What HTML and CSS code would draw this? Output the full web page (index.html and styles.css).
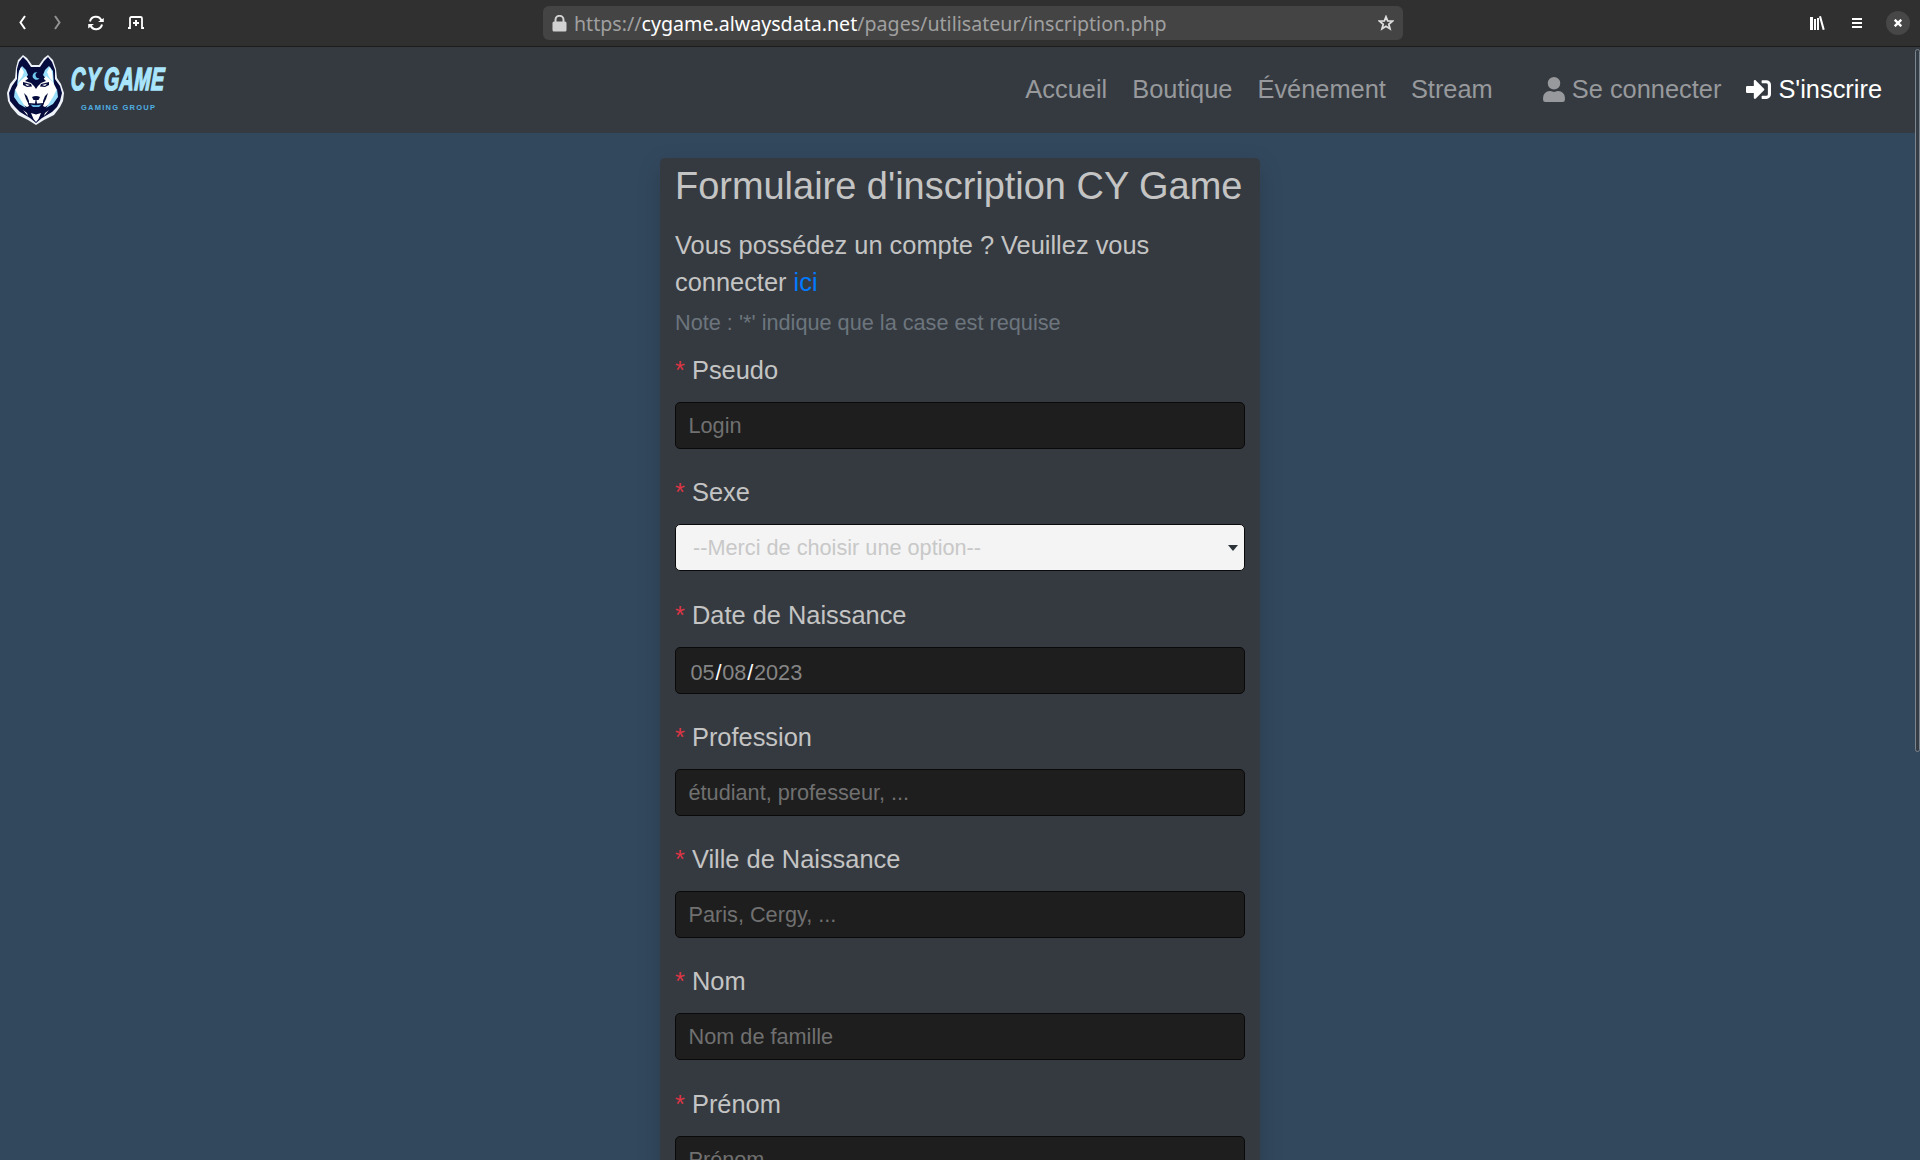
FILE: index.html
```html
<!DOCTYPE html>
<html lang="fr">
<head>
<meta charset="utf-8">
<title>Inscription - CY Game</title>
<link rel="stylesheet" href="styles.css">
</head>
<body>
<header class="chrome">
  <div class="chrome-left">
    <svg class="ic" width="8" height="16" viewBox="0 0 8 16"><path d="M6 1 1.5 7.5 6 14" fill="none" stroke="#fff" stroke-width="2"/></svg>
    <svg class="ic dim" width="8" height="16" viewBox="0 0 8 16"><path d="M1 1 5.5 7.5 1 14" fill="none" stroke="#929292" stroke-width="2"/></svg>
    <svg class="ic reload" width="16" height="16" viewBox="0 0 16 16"><g fill="none" stroke="#fff" stroke-width="2"><path d="M2 6.5A6 6 0 0 1 13.4 5.5"/><path d="M14 9.5A6 6 0 0 1 2.600 10.500"/></g><path d="M10 7h5.800V3zM6 9H.2v4.500z" fill="#fff"/></svg>
    <svg class="ic newtab" width="16" height="14" viewBox="0 0 16 14"><path d="M0 12H2V2.500Q2 1 3.500 1h9Q14 1 14 2.500V12h2" fill="none" stroke="#fff" stroke-width="1.800"/><path d="M8 4v6M5 7h6" stroke="#fff" stroke-width="2"/></svg>
  </div>
  <div class="urlbar">
    <svg width="15" height="17" viewBox="0 0 15 17"><path d="M3.500 8V4.800a4 4 0 0 1 8 0V8" fill="none" stroke="#d2d2d2" stroke-width="2"/><rect x=".5" y="6.500" width="14" height="10" rx="1.500" fill="#d2d2d2"/></svg>
    <span class="url">https://<b>cygame.alwaysdata.net</b>/pages/utilisateur/inscription.php</span>
    <svg class="star" width="16" height="16" viewBox="0 0 16 16"><path d="M8 1.800 9.700 6l4.600.2-3.500 3 1.200 4.600L8 11.300 4 13.800l1.200-4.600-3.500-3L6.300 6z" fill="none" stroke="#dedede" stroke-width="1.800"/></svg>
  </div>
  <div class="chrome-right">
    <svg width="15" height="15" viewBox="0 0 15 15"><path d="M0 1h3v13H0zM4 3h2v11H4zM7 2h2v12H7zM9 .6 11-.0 14.700 13.600 12.700 14z" fill="#fff"/></svg>
    <svg width="10" height="11" viewBox="0 0 10 11"><path d="M0 0h10v2H0zM0 4h10v2H0zM0 8h10v2H0z" fill="#fff"/></svg>
    <span class="close"><svg width="8" height="8" viewBox="0 0 8 8"><path d="M.7.7l6.600 6.600M7.300.7.7 7.300" stroke="#fff" stroke-width="2.400"/></svg></span>
  </div>
</header>
<nav class="navbar">
  <div class="brand">
    <svg class="wolf" width="58" height="70" viewBox="0 0 58 70">
      <path d="M16 0 20 3 25 10H32L37 3 41 0 46 5 49 14 50 23 54 29 57 38 56 46 53 52 47 60 37 65 29 70 21 65 11 60 4 52 1 46 0 38 3 29 8 23 9 13 11 5Z" fill="#eef3fa"/>
      <path d="M16 2 20 6 24 12H33L37 6 41 2 45 7 48 15 48 24 53 31 55 38 53 46 50 52 45 57 35 63 29 68 23 63 13 57 8 52 3 46 2 38 5 31 10 24 10 14 12 7Z" fill="#060b3d"/>
      <path d="M15 11 19 15 21 20 17 25 10 30 12 16ZM42 11 38 15 36 20 40 25 47 30 46 16Z" fill="#9adffb"/>
      <path d="M14 12 17 17 15 22 11 27 12 17ZM43 12 40 17 42 22 46 27 45 17Z" fill="#fff"/>
      <path d="M19 21 24 27 29 29 34 27 39 21 46 27 50 35 48 43 43 49 38 52 34 50 24 50 20 52 14 49 10 43 8 35 12 27Z" fill="#fff"/>
      <path d="M22 16 29 13 36 16 36 23 39 26 34 28 31 31 29 34 27 31 24 28 18 26 22 23Z" fill="#060b3d"/>
      <path d="M30.500 17.500A3.700 3.700 0 1 0 32.500 23 2.900 2.900 0 0 1 30.500 17.500Z" fill="#70c9ef"/>
      <path d="M16 27 24 29 25 31.500 20 32 16 30ZM42 27 34 29 33 31.500 38 32 42 30Z" fill="#060b3d"/>
      <path d="M18 28.800 23 30 20 31ZM40 28.800 35 30 38 31Z" fill="#fff"/>
      <path d="M8 34 12 42 19 53 12 49 7 42ZM50 34 46 42 39 53 46 49 51 42Z" fill="#9adffb"/>
      <path d="M17 38 20 41 22 46 22 50 19 44ZM41 38 38 41 36 46 36 50 39 44Z" fill="#060b3d"/>
      <path d="M25 42Q29 40 33 42L31.500 45H26.500ZM21 48 28 48.500 28.500 45H29.500L30 48.500 37 48 35 54 29 56 23 54Z" fill="#060b3d"/>
      <path d="M23.500 49.500Q29 51 34.500 49.500L32 52H26Z" fill="#65bce8"/>
      <path d="M24 58 29 59.500 34 58 31.500 64 29 67 26.500 64ZM16 55 20 58 21 61ZM42 55 38 58 37 61Z" fill="#fff"/>
    </svg>
    <svg class="wordmark" width="104" height="60" viewBox="0 0 104 60">
      <text class="wm-main" transform="translate(3.500 34.500) skewX(-3) scale(.61 1)"><tspan x="0" textLength="47">CY</tspan> <tspan x="54" textLength="99">GAME</tspan></text>
      <text class="wm-sub" x="14" y="55" textLength="74">GAMING GROUP</text>
    </svg>
  </div>
  <ul class="links">
    <li>Accueil</li><li>Boutique</li><li>Événement</li><li>Stream</li>
    <li class="login"><svg width="22" height="25" viewBox="0 0 448 512"><path fill="currentColor" d="M224 256a128 128 0 1 0 0-256 128 128 0 0 0 0 256zm89.600 32h-16.700a174 174 0 0 1-145.800 0h-16.700A134.400 134.400 0 0 0 0 422.400V464a48 48 0 0 0 48 48h352a48 48 0 0 0 48-48v-41.600A134.400 134.400 0 0 0 313.600 288z"/></svg>Se connecter</li>
    <li class="active"><svg width="25" height="25" viewBox="0 0 512 512"><path fill="currentColor" d="M416 448h-84a12 12 0 0 1-12-12v-40a12 12 0 0 1 12-12h84a32 32 0 0 0 32-32V160a32 32 0 0 0-32-32h-84a12 12 0 0 1-12-12V76a12 12 0 0 1 12-12h84a96 96 0 0 1 96 96v192a96 96 0 0 1-96 96zm-47-209L201 71c-15-15-41-4.500-41 17v96H24a24 24 0 0 0-24 24v96a24 24 0 0 0 24 24h136v96c0 21.500 26 32 41 17l168-168a24 24 0 0 0 0-34z"/></svg>S'inscrire</li>
  </ul>
</nav>
<main class="page">
  <form class="card">
    <h1>Formulaire d'inscription CY Game</h1>
    <p class="lead">Vous possédez un compte ? Veuillez vous connecter <a>ici</a></p>
    <p class="note">Note : '*' indique que la case est requise</p>
    <div class="group"><label><i>*</i> Pseudo</label><div class="field">Login</div></div>
    <div class="group"><label><i>*</i> Sexe</label><div class="field select"><span>--Merci de choisir une option--</span><svg width="10" height="6" viewBox="0 0 10 6"><path d="M0 0h10L5 6z" fill="#2b3338"/></svg></div></div>
    <div class="group"><label><i>*</i> Date de Naissance</label><div class="field date">05<b>/</b>08<b>/</b>2023</div></div>
    <div class="group"><label><i>*</i> Profession</label><div class="field">étudiant, professeur, ...</div></div>
    <div class="group"><label><i>*</i> Ville de Naissance</label><div class="field">Paris, Cergy, ...</div></div>
    <div class="group"><label><i>*</i> Nom</label><div class="field">Nom de famille</div></div>
    <div class="group"><label><i>*</i> Prénom</label><div class="field">Prénom</div></div>
  </form>
</main>
<div class="scrollbar"></div>
</body>
</html>
```
FILE: styles.css
```css
* { box-sizing: border-box; }
body {
  margin: 0;
  height: 1160px;
  overflow: hidden;
  display: flex;
  flex-direction: column;
  background: #32485d;
  font-family: "Liberation Sans", Arial, sans-serif;
  font-size: 21.7px;
  color: #c4c4c4;
}
svg { display: block; flex: none; }

.chrome {
  height: 47px;
  flex: none;
  display: grid;
  grid-template-columns: 543px 860px 1fr;
  align-items: center;
  background: #303030;
  border-bottom: 1px solid #1d1d1d;
}
.chrome-left { display: flex; align-items: center; padding-left: 19px; }
.chrome-left .dim { margin-left: 27px; }
.chrome-left .reload { margin-left: 26px; }
.chrome-left .newtab { margin-left: 24px; }
.urlbar {
  height: 34px;
  display: flex;
  align-items: center;
  padding: 0 9px;
  border-radius: 6px;
  background: #444;
}
.url {
  flex: 1;
  margin-left: 7px;
  padding-top: 1px;
  font: 19.63px/34px "Noto Sans", sans-serif;
  color: #a0a0a0;
  white-space: nowrap;
}
.url b { font-weight: 400; color: #fff; }
.chrome-right { display: flex; align-items: center; justify-content: flex-end; padding-right: 10px; gap: 27px; }
.close {
  width: 24px;
  height: 24px;
  margin-left: -3px;
  border-radius: 50%;
  background: #474747;
  display: flex;
  align-items: center;
  justify-content: center;
}

.navbar {
  height: 86px;
  flex: none;
  display: flex;
  justify-content: space-between;
  align-items: center;
  background: #353a40;
  padding: 0 38px 2px 7px;
}
.brand { display: flex; align-items: center; }
.wolf { margin-top: 2px; }
.wordmark { margin-left: 2px; margin-top: -8px; }
.wm-main { font: italic 700 32px "Liberation Sans", sans-serif; fill: #a9e5fc; stroke: #a9e5fc; stroke-width: 1.600; }
.wm-sub { font: 700 7.5px "Liberation Sans", sans-serif; fill: #4fb0e4; }
.links {
  display: flex;
  gap: 25px;
  margin: 0;
  padding: 0;
  list-style: none;
  font-size: 25.4px;
  line-height: 38px;
  color: #97999c;
}
.links .login { margin-left: 25px; }
.links li { display: flex; align-items: center; gap: 7px; }
.links .active { color: #fff; }

.page { flex: 1; min-height: 0; overflow: hidden; display: flex; justify-content: center; padding-top: 25px; }
.card {
  width: 600px;
  height: 1300px;
  padding: 5px 15px;
  border-radius: 5px;
  background: #353a40;
  box-shadow: 0 8px 24px rgba(0, 0, 0, .15);
}
h1 { margin: 0 0 17.500px; font-size: 37.95px; font-weight: 400; line-height: 46px; white-space: nowrap; }
.lead { margin: 0 0 4.500px; font-size: 25.4px; line-height: 37.500px; }
.lead a { color: #007bff; }
.note { margin: 0 0 11px; line-height: 34px; color: #6c757d; }
.group { height: 122.3px; }
label { display: block; height: 51px; font-size: 25.4px; line-height: 38px; }
label i { font-style: normal; color: #dc3545; }
.field {
  height: 47px;
  padding: 0 12.500px;
  border: 1px solid #0a0a0a;
  border-radius: 5px;
  background: #1e1e1e;
  color: #707070;
  line-height: 45px;
}
.field b { font-weight: 400; color: #fff; margin: 0 .8px; }
.select {
  display: flex;
  align-items: center;
  justify-content: space-between;
  padding: 0 6px 0 17px;
  background: #f4f4f4;
  color: #c8c8c8;
}
.date { padding: 2px 14.500px 0; color: #858585; }
.scrollbar {
  position: absolute;
  left: 1915px;
  top: 49px;
  width: 5px;
  height: 703px;
  border: 1px solid #7c858e;
  border-radius: 3px;
  background: #343c46;
}
```
